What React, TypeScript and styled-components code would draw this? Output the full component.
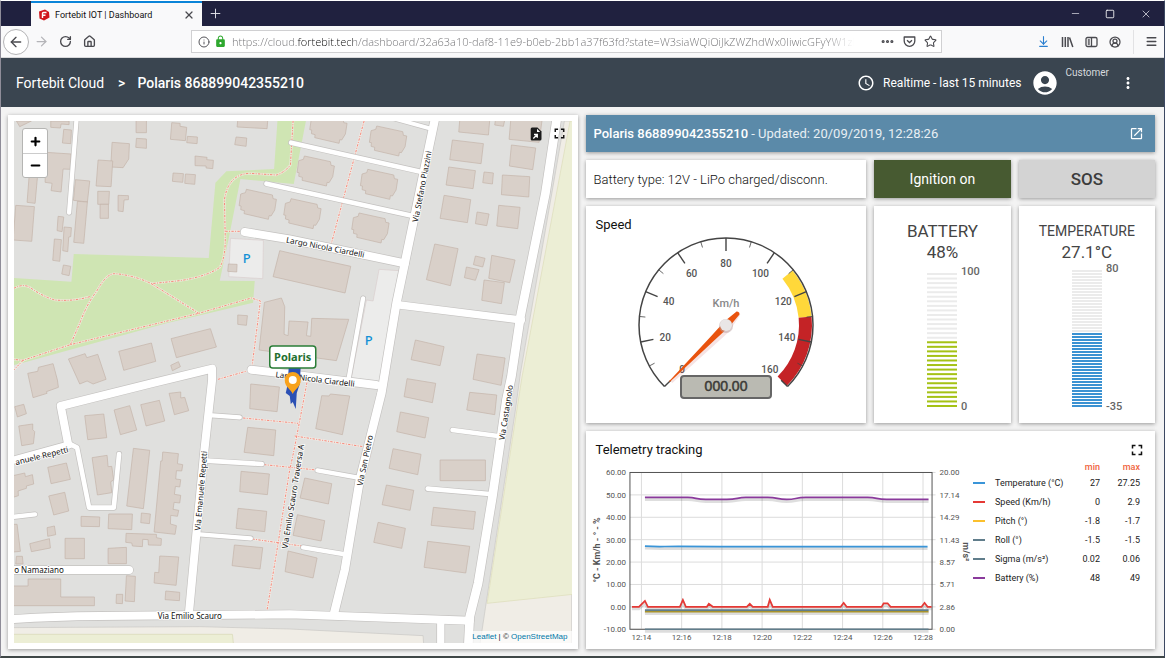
import React from "react";
import styled, { createGlobalStyle } from "styled-components";
import {
  ArrowDownToLine,
  ArrowLeft,
  ArrowRight,
  CircleUserRound,
  Ellipsis,
  House,
  Info,
  Menu,
  Minus,
  Plus,
  RotateCw,
  Square,
  Star,
  X,
} from "lucide-react";
import { MdAccessTime, MdAccountCircle, MdFullscreen, MdLock, MdMoreVert, MdOpenInNew } from "react-icons/md";

const GlobalStyle = createGlobalStyle`
  * { box-sizing: border-box; }
  body { margin: 0; font-family: Roboto, "Liberation Sans", sans-serif; color: #222; }
  button { font: inherit; color: inherit; border: 0; padding: 0; background: none; cursor: pointer; }
  h1, h2, p { margin: 0; font-weight: 400; }
  svg { display: block; flex: none; }
`;

/* ---------- browser window ---------- */

const Window = styled.div`
  display: flex;
  flex-direction: column;
  min-height: 100vh;
  border-top: 1px solid #fff;
  border-left: 1px solid #8f8d99;
  border-right: 1px solid #3c4862;
  border-bottom: 2px solid #3f4747;
  background: #f3f3f3;
`;

const TabStrip = styled.div`
  display: flex;
  align-items: stretch;
  height: 25px;
  padding-left: 30px;
  background: #20213f;
`;

const Tab = styled.div`
  display: flex;
  align-items: center;
  gap: 5px;
  width: 171px;
  padding: 0 6px 0 7px;
  border-top: 2px solid #0a84d8;
  background: #f9f9fa;
  font-size: 9px;
  color: #111;
`;

const TabTitle = styled.span`
  flex: 1;
  white-space: nowrap;
`;

const IconButton = styled.button<{ $w?: number; $color?: string }>`
  display: inline-flex;
  align-items: center;
  justify-content: center;
  flex: none;
  width: ${(p) => p.$w ?? 24}px;
  color: ${(p) => p.$color ?? "#4a4a4f"};
`;

const WindowControls = styled.div`
  display: flex;
  margin-left: auto;
`;

const Toolbar = styled.div`
  display: flex;
  align-items: center;
  height: 32px;
  padding-left: 2px;
  background: #f9f9fa;
  border-bottom: 1px solid #d8d8da;
`;

const BackButton = styled(IconButton)`
  height: 26px;
  border: 1px solid #b4b4b6;
  border-radius: 50%;
  background: #fff;
`;

const UrlBar = styled.div`
  display: flex;
  align-items: center;
  flex: 1;
  min-width: 0;
  height: 23px;
  margin: 0 89px 0 90px;
  padding: 0 3px 0 6px;
  gap: 4px;
  border: 1px solid #d0d0d2;
  background: #fff;
  color: #55555a;
`;

const UrlInput = styled.input`
  flex: 1;
  min-width: 0;
  margin: 0 20px 0 1px;
  padding: 0;
  border: 0;
  outline: 0;
  font: 11px/18px "Open Sans", "Noto Sans", sans-serif;
  font-weight: 300;
  -webkit-text-fill-color: transparent;
  background: linear-gradient(
    to right,
    #6f6f72 0 65px,
    #0c0c0d 65px 121px,
    #6f6f72 121px calc(100% - 30px),
    #ffffff 100%
  );
  -webkit-background-clip: text;
  background-clip: text;
`;

const MenuDivider = styled.span`
  width: 1px;
  height: 24px;
  margin: 0 4px 0 6px;
  background: #e2e2e4;
`;

/* ---------- dashboard shell ---------- */

const Header = styled.header`
  display: flex;
  align-items: center;
  height: 49px;
  padding: 0 24px 0 15px;
  background: #3a4550;
  color: #fff;
  font-size: 14px;
`;

const Crumb = styled.a`
  color: #fff;
  text-decoration: none;
`;

const CrumbArrow = styled.span`
  margin: 0 12px 0 14px;
  font-weight: 500;
`;

const CrumbCurrent = styled.h1`
  font-size: 14px;
  font-weight: 500;
`;

const TimeWindow = styled.button`
  display: flex;
  align-items: center;
  gap: 8px;
  margin-left: auto;
  font-size: 12px;
`;

const User = styled.div`
  display: flex;
  align-items: center;
  gap: 6px;
  margin: 0 7px 0 10px;
`;

const UserRole = styled.span`
  padding-bottom: 20px;
  font-size: 10px;
  color: #d6dade;
`;

const Main = styled.main`
  display: grid;
  grid-template-columns: minmax(0, 1fr) minmax(0, 1fr);
  gap: 8px;
  flex: 1;
  padding: 8px 9px 7px 7px;
`;

const Card = styled.section`
  background: #fff;
  box-shadow: 0 1px 4px rgba(0, 0, 0, 0.38);
`;

const Widgets = styled.div`
  display: grid;
  grid-template-columns: repeat(4, minmax(0, 1fr));
  grid-template-rows: 37px 38px minmax(217px, auto) minmax(218px, 1fr);
  gap: 8px;
`;

/* ---------- map ---------- */

const MapCard = styled(Card)`
  position: relative;
  padding: 6px;
`;

const MapSvg = styled.svg`
  width: 100%;
  height: 100%;
  font-family: "Noto Sans", "Open Sans", sans-serif;
`;

const ZoomControl = styled.div`
  position: absolute;
  top: 13px;
  left: 14px;
  display: flex;
  flex-direction: column;
  width: 26px;
  border: 1px solid #b5b5b3;
  border-radius: 3px;
  background: #fff;
  overflow: hidden;
`;

const ZoomButton = styled.button`
  display: flex;
  align-items: center;
  justify-content: center;
  height: 24px;
  color: #000;
  & + & {
    border-top: 1px solid #ccc;
  }
`;

const MapActions = styled.div`
  position: absolute;
  top: 10px;
  right: 10px;
  display: flex;
  gap: 8px;
`;

const Attribution = styled.div`
  position: absolute;
  right: 6px;
  bottom: 6px;
  padding: 0 4px;
  font: 8px/12px "Liberation Sans", sans-serif;
  background: rgba(255, 255, 255, 0.7);
  a {
    color: #0078a8;
    text-decoration: none;
  }
`;

/* ---------- widgets ---------- */

const StatusBar = styled(Card)`
  grid-column: 1 / -1;
  display: flex;
  align-items: center;
  justify-content: space-between;
  padding: 0 11px 0 8px;
  background: #5b8aa9;
  color: #e8eff4;
  font-size: 13px;
  strong {
    font-weight: 500;
    color: #fff;
  }
`;

const BatteryType = styled(Card)`
  grid-column: span 2;
  display: flex;
  align-items: center;
  padding-left: 8px;
  font-size: 13px;
  font-weight: 300;
  color: #111;
`;

const StateButton = styled.button<{ $bg: string; $fg: string; $size: number; $weight: number }>`
  background: ${(p) => p.$bg};
  color: ${(p) => p.$fg};
  font-size: ${(p) => p.$size}px;
  font-weight: ${(p) => p.$weight};
  box-shadow: 0 1px 4px rgba(0, 0, 0, 0.38);
`;

const SpeedCard = styled(Card)`
  grid-column: span 2;
  padding-top: 10px;
`;

const CardTitle = styled.h2`
  padding-left: 10px;
  font-size: 13px;
  line-height: 18px;
  color: #111;
`;

const GaugeSvg = styled.svg`
  margin: 0 auto;
`;

const LevelCard = styled(Card)`
  display: flex;
  flex-direction: column;
  align-items: center;
  padding-top: 14px;
  color: #444;
`;

const LevelTitle = styled.h2<{ $size: number }>`
  font-size: ${(p) => p.$size}px;
  line-height: 22px;
`;

const LevelValue = styled.p`
  font-size: 17px;
  line-height: 20px;
`;

const TelemetryCard = styled(Card)`
  grid-column: 1 / -1;
  padding-top: 10px;
`;

const TelemetryHead = styled.div`
  display: flex;
  align-items: center;
  justify-content: space-between;
  height: 18px;
  padding-right: 9px;
`;

const TelemetryBody = styled.div`
  display: grid;
  grid-template-columns: minmax(0, 1fr) 182px;
  align-items: start;
`;

const ChartSvg = styled.svg`
  width: 100%;
`;

const Legend = styled.table`
  border-collapse: collapse;
  width: 167px;
  margin-top: 3px;
  font-size: 9px;
  color: #222;
  th,
  td {
    height: 19px;
    padding: 0;
    text-align: right;
    font-weight: 400;
  }
  thead th,
  thead td {
    height: 11px;
    line-height: 11px;
    color: #f0643c;
    font-weight: 500;
  }
  tbody th {
    text-align: left;
  }
`;

const Swatch = styled.span<{ $color: string }>`
  display: block;
  width: 12px;
  height: 2px;
  background: ${(p) => p.$color};
`;

/* ---------- map data (three units per pixel) ---------- */

const buildings: { at: [number, number]; shapes: string[] }[] = [
  {
    at: [0, 0],
    shapes: [
      "50,33 60,50 95,33",
      "153,33 153,52 182,54 184,42 208,44 208,33",
      "192,58 215,60 213,101 188,99",
      "138,127 214,132 211,178 190,177 184,246 154,242 157,220 136,217",
      "88,200 113,202 106,280 82,277",
      "48,286 104,290 96,394 40,390",
      "175,319 192,321 187,365 172,362",
      "193,351 215,353 213,380 207,381 204,425 189,422",
      "164,387 185,389 180,454 159,451",
      "191,465 213,469 208,497 186,492",
      "227,209 270,213 263,276 221,271",
      "233,274 263,276 252,400 222,397",
      "337,97 389,101 387,147 370,173 333,171",
      "295,150 339,153 334,230 289,228",
      "294,244 329,244 327,283 294,283",
      "301,283 326,283 326,325 301,325",
      "355,256 386,257 386,269 373,270 370,305 355,303",
      "409,30 440,30 440,68 409,68",
      "410,85 440,87 440,115 408,112",
      "516,38 541,40 541,49 561,52 557,92 512,88",
      "563,79 593,81 592,101 561,98",
      "586,138 622,142 621,149 641,151 639,176 619,174 619,168 586,167",
      "520,189 551,191 549,217 518,214",
      "557,192 587,194 585,223 555,220",
      "714,30 804,30 802,56 712,51",
      "709,81 741,84 739,109 705,104",
      "686,462 712,463 711,486 684,484",
      "840,422 870,429 1053,469 1036,549 820,500",
      "794,577 845,564 855,590 853,673 865,677 868,633 925,636 920,677 933,679 936,625 1047,628 1010,752 778,720",
      "714,615 743,617 740,646 714,643",
      "514,686 632,656 650,711 530,743",
      "357,724 455,699 468,754 372,781",
      "513,766 536,755 542,770 518,782",
      "206,747 256,731 261,743 294,733 319,808 280,822 262,813 240,822",
      "84,790 114,784 116,772 160,761 173,810 176,832 140,845 142,850 100,863",
    ],
  },
  {
    at: [870, 0],
    shapes: [
      "510,30 600,30 596,75 507,66",
      "617,30 645,30 641,49 615,45",
      "663,30 757,30 748,97 658,88",
      "488,90 581,101 574,161 480,149",
      "477,171 557,182 550,236 469,225",
      "583,186 611,189 608,222 579,218",
      "665,105 738,114 729,179 659,168",
      "638,195 720,200 717,261 635,254",
      "463,256 543,269 533,338 451,325",
      "562,306 598,312 591,347 557,341",
      "627,286 691,292 684,356 621,348",
      "435,402 505,416 482,527 410,509",
      "557,438 586,445 579,471 551,464",
      "530,471 568,479 557,511 524,503",
      "606,436 676,450 660,518 597,505",
      "583,510 644,518 635,581 576,571",
      "377,690 463,710 451,767 364,749",
      "562,732 646,744 634,826 550,808",
    ],
  },
  {
    at: [870, 810],
    shapes: [
      "352,-4 438,10 428,68 343,50",
      "332,96 417,113 406,174 321,155",
      "310,206 394,223 384,284 298,265",
      "290,315 372,331 361,391 277,374",
      "265,427 347,445 336,505 252,487",
      "540,37 621,45 615,104 531,90",
      "451,240 587,240 587,302 451,302",
      "431,382 557,395 551,448 424,436",
      "414,484 540,499 528,579 403,562",
      "96,47 118,48 122,42 180,48 158,164 78,146",
      "45,294 126,311 116,372 31,354",
      "23,404 105,422 94,483 10,466",
      "-5,513 82,534 70,594 -14,575",
    ],
  },
  {
    at: [0, 810],
    shapes: [
      "753,12 839,21 832,95 750,86",
      "744,142 828,150 822,227 733,217",
      "724,274 809,282 803,344 720,335",
      "715,385 801,394 795,455 709,445",
      "704,495 789,503 781,567 697,557",
      "45,80 72,73 80,101 53,111",
      "57,138 99,132 99,149 105,155 101,191 66,197",
      "255,107 312,102 321,173 264,179",
      "343,90 390,77 411,150 362,164",
      "423,74 479,61 495,123 439,138",
      "508,40 543,36 543,54 555,52 567,92 524,104",
      "277,233 322,226 325,260 336,259 342,300 333,305 336,338 293,345",
      "401,205 450,211 431,386 381,378",
      "489,216 536,221 533,251 549,254 546,273 530,272 528,297 543,299 540,321 527,319 524,343 543,346 540,369 523,367 520,388 537,391 533,409 513,406 512,432 530,437 526,463 463,456 483,243 487,243",
      "144,262 200,249 212,298 154,311",
      "147,348 195,337 207,393 162,405",
      "40,287 75,279 77,290 98,284 102,312 80,318 80,325 55,333 56,347 40,352",
      "244,409 300,411 299,440 244,439",
      "327,402 398,402 396,449 325,446",
      "425,399 452,402 449,431 423,428",
      "379,460 470,463 470,473 485,476 484,496 446,495 445,479 429,478 428,500 398,498 396,489 378,487",
      "142,443 164,438 168,464 144,469",
      "90,491 149,476 152,504 95,515",
      "196,475 254,475 254,536 196,536",
      "325,505 380,502 380,551 325,551",
      "40,433 52,433 62,514 40,516",
      "50,529 68,529 70,552 48,552",
      "480,528 537,531 529,616 463,609 465,577 477,578",
      "498,633 540,637 539,662 496,659",
      "380,587 407,589 404,665 376,663",
      "350,643 369,643 368,671 349,670",
      "40,618 85,618 85,597 183,597 183,651 284,651 284,677 40,677",
    ],
  },
];

const villa =
  "-34,-45 44,-28 46,-17 56,-15 51,17 40,35 34,34 32,45 -41,28 -40,19 -51,16 -50,5 -56,4 -51,-31 -37,-35";
const villaSpots = [
  [774, 283],
  [908, 311],
  [948, 183],
  [1165, 93],
  [1138, 223],
  [1112, 354],
  [986, 55],
];

const roads: [string, number][] = [
  ["M231,20 L208,308", 13],
  ["M800,221 L1240,318", 14],
  ["M874,98 L1262,185", 14],
  ["M1145,15 L1290,55", 12],
  ["M1200,585 L1565,630", 22],
  ["M1090,565 L1045,815", 13],
  ["M735,366 L870,388 L1215,460", 24],
  ["M755,779 L870,793 L1130,825", 24],
  ["M20,1056 L207,1005", 22],
  ["M207,1000 L232,1013 L268,1193 L342,1193 L358,1032", 14],
  ["M20,1223 L106,1213", 13],
  ["M20,1380 L388,1380", 24],
  ["M637,916 L720,922", 13],
  ["M620,1052 L786,1062", 14],
  ["M600,1273 L753,1285", 13],
  ["M1358,960 L1495,978", 13],
  ["M1284,1136 L1470,1152", 14],
  ["M953,1081 L1075,1103", 13],
  ["M910,1312 L1030,1332", 13],
  ["M1323,1530 L1323,1620", 22],
  ["M205,1002 L183,888 L455,820 L637,776 L637,810 L614,1020 L590,1270 L568,1505", 24],
  ["M1307,20 L1265,220 L1215,460 L1190,580 L1145,850 L1080,1110 L1035,1380 L1003,1510", 25],
  ["M1672,20 L1637,250 L1562,620 L1535,800 L1520,870 L1478,1160 L1435,1420 L1410,1520 L1405,1620", 26],
  ["M20,1529 Q150,1519 300,1518 L870,1513 L1410,1532", 24],
];

const footpaths = [
  "M42,535 Q70,520 90,532 Q130,560 165,570 Q220,575 270,560",
  "M212,704 L240,640 Q262,580 290,545 Q320,490 345,491 Q400,495 455,521 L540,512 Q620,500 660,472 Q680,440 676,360 L674,270 Q685,192 750,190 L830,195 Q855,187 872,165 L880,33",
  "M455,521 L597,610",
  "M30,747 L70,751 L212,704 L597,610 L755,564 L782,573 L757,768",
  "M70,751 L42,780",
  "M677,364 L722,364",
  "M1093,33 L995,400",
  "M655,808 L745,782",
  "M730,924 L895,940",
  "M793,1064 L950,1080",
  "M758,1287 L905,1308",
  "M885,978 L1090,1010",
  "M925,800 L885,1010 L868,1090 L835,1300 L802,1500",
];

const streetNames: { text: string; x: number; y: number; angle: number; anchor?: "end" }[] = [
  { text: "Via Stefano Piazzini", x: 425, y: 187, angle: -79 },
  { text: "Largo Nicola Ciardelli", x: 325, y: 250, angle: 11 },
  { text: "Largo Nicola Ciardelli", x: 315, y: 382, angle: 7 },
  { text: "Via San Pietro", x: 368, y: 461, angle: -78 },
  { text: "Via Castagnolo", x: 509, y: 413, angle: -81 },
  { text: "Via Emilio Scauro Traversa A", x: 296, y: 497, angle: -81 },
  { text: "Via Emanuele Repetti", x: 204, y: 491, angle: -85 },
  { text: "anuele Repetti", x: 69, y: 452, angle: -14, anchor: "end" },
  { text: "o Namaziano", x: 64, y: 573, angle: 0, anchor: "end" },
  { text: "Via Emilio Scauro", x: 190, y: 619, angle: 0 },
];

function StreetMap() {
  return (
    <MapSvg viewBox="14 121 558 522" preserveAspectRatio="xMidYMid slice" role="img" aria-label="Street map">
      <rect x="0" y="100" width="600" height="560" fill="#e0e0de" />
      <g transform="translate(0 110) scale(0.33333)" strokeLinejoin="round">
        <path
          d="M1694,33 H1716 V1620 H1438 L1450,1540 L1547,900 L1562,790 Z"
          fill="#f0ede6"
          stroke="#c9c7c4"
          strokeWidth="2"
        />
        <path d="M1711,33 L1566,805 L1462,1480 L1730,1452 V33 Z" fill="#eceed5" stroke="#dcdcb8" strokeWidth="2" />
        <path d="M20,1553 L600,1550 L870,1557 L1270,1577 L1273,1620 H20 Z" fill="#f0ede6" stroke="#c9c7c4" strokeWidth="2" />
        <path d="M20,1573 H698 L703,1620 H20 Z" fill="#eceed5" stroke="#d6d8b4" strokeWidth="2" />
        <path
          d="M222,432 L627,444 L647,218 L680,184 L823,177 L834,20 H921 L882,222 L722,207 L687,385 L660,512 L765,513 L760,578 L500,640 L70,758 L42,765 L20,504 L42,504 L215,515 Z"
          fill="#cfe5b3"
        />
        <g fill="#ececeb" stroke="#d9cdcd" strokeWidth="2">
          <polygon points="692,385 791,391 789,506 687,500" />
          <polygon points="1138,478 1197,482 1175,620 1142,825 1052,818 1100,570 1120,573" />
        </g>
        <g fill="#d9d0c9" stroke="#c2b2a7" strokeWidth="2">
          {buildings.map((b) => (
            <g key={b.at.join()} transform={`translate(${b.at[0]} ${b.at[1]})`}>
              {b.shapes.map((s) => (
                <polygon key={s} points={s} />
              ))}
            </g>
          ))}
          {villaSpots.map(([x, y]) => (
            <polygon key={`${x}-${y}`} points={villa} transform={`translate(${x} ${y})`} />
          ))}
        </g>
        <g fill="none" strokeLinejoin="round">
          {footpaths.map((d) => (
            <path key={d} d={d} stroke="#f3ece6" strokeOpacity="0.7" strokeWidth="7" />
          ))}
          {footpaths.map((d) => (
            <path key={d} d={d} stroke="#f98a7c" strokeWidth="3" strokeDasharray="7 4 3 4" />
          ))}
          <g strokeLinecap="round">
            {roads.map(([d, w]) => (
              <path key={d} d={d} stroke="#c4c2c0" strokeWidth={w + 4} />
            ))}
            {roads.map(([d, w]) => (
              <path key={d} d={d} stroke="#fff" strokeWidth={w} />
            ))}
          </g>
        </g>
      </g>
      <g fontSize="8" fill="#111" stroke="#fff" strokeWidth="2" strokeOpacity="0.8" paintOrder="stroke">
        {streetNames.map((s) => (
          <text
            key={`${s.text}${s.x}`}
            textAnchor={s.anchor ?? "middle"}
            transform={`translate(${s.x} ${s.y}) rotate(${s.angle})`}
          >
            {s.text}
          </text>
        ))}
      </g>
      <g fontSize="13" fontWeight="500" fill="#1290d6" textAnchor="middle">
        <text x="247" y="263">P</text>
        <text x="369" y="345">P</text>
      </g>
      <path d="M289,366 H301 L300,384 L297,393 L296,409 L293,402 L291,404 L290,396 L286,393 L288,384 Z" fill="#2b50b4" />
      <path d="M293,394 C291,389 285,387 285,380 A8,8 0 0 1 301,380 C301,387 295,389 293,394 Z" fill="#f8a21c" />
      <circle cx="293" cy="380" r="4" fill="#fff" />
      <rect x="270" y="346" width="46" height="22" rx="3" fill="#fff" stroke="#2a7d37" strokeWidth="1.5" />
      <text
        x="293"
        y="361"
        fontSize="11"
        fontWeight="700"
        fill="#256f30"
        textAnchor="middle"
        fontFamily="'Noto Sans', sans-serif"
      >
        Polaris
      </text>
    </MapSvg>
  );
}

function ExportIcon() {
  return (
    <svg width="16" height="16" viewBox="0 0 16 16" aria-hidden="true">
      <path d="M4 1.500h5.500l4 4v7.500q0 1.500-1.500 1.500h-8q-1.300 0-1.300-1.500v-10q0-1.500 1.300-1.500z" fill="#1c1c1c" />
      <path d="M9 2.800v3.200h3.200z" fill="#fff" />
      <path d="M5.300 12.500l3.500-3.500M6 8.500h3.300v3.300" fill="none" stroke="#fff" strokeWidth="1.300" />
    </svg>
  );
}

/* ---------- speed gauge ---------- */

const polar = (value: number, r: number): [number, number] => {
  const a = ((-135 + (value / 160) * 270) * Math.PI) / 180;
  return [r * Math.sin(a), -r * Math.cos(a)];
};

const band = (from: number, to: number, outer: number, inner: number) => {
  const [a, b, c, d] = [polar(from, outer), polar(to, outer), polar(to, inner), polar(from, inner)];
  return `M${a} A${outer},${outer} 0 0 1 ${b} L${c} A${inner},${inner} 0 0 0 ${d} Z`;
};

function SpeedGauge() {
  const steps = Array.from({ length: 17 }, (_, i) => i * 10);
  return (
    <GaugeSvg width="200" height="170" viewBox="-100 -91 200 170" role="img" aria-label="Speed 0 Km/h">
      <path d={band(110, 130, 86, 73)} fill="#ffd83a" />
      <path d={band(130, 160, 86, 73)} fill="#c42326" />
      <path d={`M${polar(0, 87)} A87,87 0 1 1 ${polar(160, 87)}`} fill="none" stroke="#444" strokeWidth="1.500" />
      {steps.map((v) => {
        const major = v % 20 === 0;
        const [x1, y1] = polar(v, 87);
        const [x2, y2] = polar(v, v % 160 === 0 ? 78 : major ? 74 : 81);
        return <line key={v} x1={x1} y1={y1} x2={x2} y2={y2} stroke="#444" strokeWidth={major ? 1.4 : 0.8} />;
      })}
      <g fontSize="10" fontWeight="500" fill="#555" textAnchor="middle">
        {steps
          .filter((v) => v % 20 === 0)
          .map((v) => {
            const [x, y] = polar(v, 62);
            return (
              <text key={v} x={x} y={y + 4}>
                {v}
              </text>
            );
          })}
        <text x="0" y="-18" fontSize="11" fill="#888">
          Km/h
        </text>
      </g>
      <g transform="rotate(45)">
        <path d="M-2,-17 Q0,-20 3,-17 L7,3 L3,79 L1,79 L-2,0 Z" fill="#c04040" opacity="0.15" />
        <path d="M-2,-17 Q0,-19 2,-17 L3.500,-2 L2.500,20 L0.500,80 L-0.500,80 L-2.500,20 L-3.500,-2 Z" fill="#e9530e" />
      </g>
      <circle cx="0" cy="1" r="7" fill="#b9a0a0" opacity="0.5" />
      <circle cx="0" cy="0" r="6" fill="#e9e6e6" />
      <rect x="-45" y="51" width="90" height="22" rx="3" fill="#babab2" stroke="#666" strokeWidth="2" />
      <text
        x="0"
        y="66"
        fontSize="14"
        fill="#3c3c38"
        textAnchor="middle"
        stroke="#3c3c38"
        strokeWidth="0.500"
        fontFamily="'Liberation Sans', sans-serif"
      >
        000.00
      </text>
    </GaugeSvg>
  );
}

/* ---------- level bars ---------- */

interface LevelProps {
  title: string;
  size: number;
  value: string;
  top: string;
  bottom: string;
  count: number;
  filled: number;
  height: number;
  color: string;
}

function Level({ title, size, value, top, bottom, count, filled, height, color }: LevelProps) {
  const pitch = (height - 2) / (count - 1);
  const start = 145 - height;
  return (
    <LevelCard>
      <LevelTitle $size={size}>{title}</LevelTitle>
      <LevelValue>{value}</LevelValue>
      <svg width="110" height="151" viewBox="0 0 110 151" aria-hidden="true">
        {Array.from({ length: count }, (_, i) => (
          <rect
            key={i}
            x="40"
            y={start + i * pitch}
            width="30"
            height="2"
            fill={i >= count - filled ? color : "#ebebeb"}
          />
        ))}
        <g fontSize="11" fontWeight="500" fill="#666">
          <text x="74" y={start + 2}>
            {top}
          </text>
          <text x="74" y="148">
            {bottom}
          </text>
        </g>
      </svg>
    </LevelCard>
  );
}

/* ---------- telemetry chart ---------- */

const leftTicks = ["60.00", "50.00", "40.00", "30.00", "20.00", "10.00", "0.00", "-10.00"];
const rightTicks = ["20.00", "17.14", "14.29", "11.43", "8.57", "5.71", "2.86", "0.00"];
const timeTicks = ["12:14", "12:16", "12:18", "12:20", "12:22", "12:24", "12:26", "12:28"];

const series = [
  { d: "M645,629.500 H929", color: "#607d8b" },
  { d: "M645,611.800 H929", color: "#a8932c" },
  { d: "M645,610.300 H929", color: "#607d8b" },
  {
    d: "M632,607 H639 L642,604 L645,601 L648,607 H680 L683,600 L686,607 H707 L709,604 L713,607 H747 L750,604 L753,607 H768 L770,600 L773,607 H841 L844,603 L847,607 H882 L884,603.500 H888 L891,607 H922 L925,603 L928,607 H932",
    color: "#e53935",
  },
  { d: "M645,546.200 Q655,546.800 665,546.600 T720,546.700 H928", color: "#3a95d8" },
  {
    d: "M645,497.500 H688 C697,497.500 695,499.500 706,499.500 H727 C738,499.500 737,497.500 746,497.500 H768 C778,497.500 777,499.500 787,499.500 S795,497.500 806,497.500 H868 C878,497.500 876,499.500 887,499.500 H929",
    color: "#8a3a9c",
  },
];

function TelemetryChart() {
  const row = (i: number) => 472.5 + i * 22.43;
  const col = (i: number) => 641.5 + i * 40.28;
  return (
    <ChartSvg viewBox="586 459 388 186" role="img" aria-label="Telemetry tracking chart">
      {leftTicks.map((_, i) => (
        <line key={i} x1="630" x2="936" y1={row(i)} y2={row(i)} stroke="#dcdcdc" />
      ))}
      {timeTicks.map((_, i) => (
        <line key={i} x1={col(i)} x2={col(i)} y1="473" y2="629" stroke="#dcdcdc" />
      ))}
      <rect x="630" y="472.500" width="302.500" height="157" fill="none" stroke="#545454" />
      <g fill="none" strokeWidth="3" stroke="#000" opacity="0.13" transform="translate(0 2)">
        {series.map((s) => (
          <path key={s.d} d={s.d} />
        ))}
      </g>
      <g fill="none" strokeWidth="1.700">
        {series.map((s) => (
          <path key={s.d} d={s.d} stroke={s.color} />
        ))}
      </g>
      <g fontSize="8" fill="#545454">
        {leftTicks.map((t, i) => (
          <text key={t} x="626" y={row(i) + 3} textAnchor="end">
            {t}
          </text>
        ))}
        {rightTicks.map((t, i) => (
          <text key={t} x="940" y={row(i) + 3}>
            {t}
          </text>
        ))}
        {timeTicks.map((t, i) => (
          <text key={t} x={col(i)} y="640" textAnchor="middle">
            {t}
          </text>
        ))}
      </g>
      <g fontSize="9" fontWeight="700" fill="#545454" textAnchor="middle">
        <text transform="translate(600 550) rotate(-90)">°C - Km/h - ° - %</text>
        <text transform="translate(963 552) rotate(90)">m/s²</text>
      </g>
    </ChartSvg>
  );
}

const legendRows = [
  { name: "Temperature (°C)", color: "#3a95d8", min: "27", max: "27.25" },
  { name: "Speed (Km/h)", color: "#e53935", min: "0", max: "2.9" },
  { name: "Pitch (°)", color: "#fbc02d", min: "-1.8", max: "-1.7" },
  { name: "Roll (°)", color: "#607d8b", min: "-1.5", max: "-1.5" },
  { name: "Sigma (m/s²)", color: "#607d8b", min: "0.02", max: "0.06" },
  { name: "Battery (%)", color: "#8a3a9c", min: "48", max: "49" },
];

function TelemetryLegend() {
  return (
    <Legend>
      <colgroup>
        <col style={{ width: 22 }} />
        <col />
        <col style={{ width: 30 }} />
        <col style={{ width: 40 }} />
      </colgroup>
      <thead>
        <tr>
          <td />
          <td />
          <th scope="col">min</th>
          <th scope="col">max</th>
        </tr>
      </thead>
      <tbody>
        {legendRows.map((r) => (
          <tr key={r.name}>
            <td>
              <Swatch $color={r.color} />
            </td>
            <th scope="row">{r.name}</th>
            <td>{r.min}</td>
            <td>{r.max}</td>
          </tr>
        ))}
      </tbody>
    </Legend>
  );
}

/* ---------- browser icons ---------- */

function FortebitLogo() {
  return (
    <svg width="12" height="12" viewBox="0 0 12 12" aria-hidden="true">
      <path d="M1 2.500L7 .5l4 2.500.5 5.500L6 11.500 1.500 9.500z" fill="#d0161c" />
      <path d="M8.500 3.500H5.500q-1 0-1 1v4.500M4.500 6.300h3" fill="none" stroke="#fff" strokeWidth="1.400" />
    </svg>
  );
}

function PocketIcon() {
  return (
    <svg width="13" height="13" viewBox="0 0 13 13" fill="none" stroke="currentColor" strokeWidth="1.300" aria-hidden="true">
      <path d="M1.200 2h10.600v4a5.300 5.300 0 0 1-10.600 0z" strokeLinejoin="round" />
      <path d="M4 5.200l2.500 2.300L9 5.200" />
    </svg>
  );
}

function LibraryIcon() {
  return (
    <svg width="13" height="12" viewBox="0 0 13 12" fill="none" stroke="currentColor" strokeWidth="1.500" aria-hidden="true">
      <path d="M1.500 1v10M4.300 1v10M7 1v10M8.500 1.500l3.300 9.500" />
    </svg>
  );
}

function SidebarIcon() {
  return (
    <svg width="13" height="12" viewBox="0 0 13 12" fill="none" stroke="currentColor" strokeWidth="1.300" aria-hidden="true">
      <rect x="1" y="1.500" width="11" height="9" rx="1.500" />
      <path d="M6.500 1.500v9M2.800 4h2M2.800 6h2M2.800 8h2" />
    </svg>
  );
}

export default function App() {
  return (
    <>
      <GlobalStyle />
      <Window>
        <TabStrip>
          <Tab>
            <FortebitLogo />
            <TabTitle>Fortebit IOT | Dashboard</TabTitle>
            <IconButton $w={14} aria-label="Close tab">
              <X size={12} strokeWidth={2.5} />
            </IconButton>
          </Tab>
          <IconButton $w={26} $color="#e4e4ec" aria-label="New tab">
            <Plus size={15} strokeWidth={1.5} />
          </IconButton>
          <WindowControls>
            <IconButton $w={34} $color="#e4e4ec" aria-label="Minimize">
              <Minus size={11} strokeWidth={1.5} />
            </IconButton>
            <IconButton $w={35} $color="#fff" aria-label="Maximize">
              <Square size={10} strokeWidth={2} />
            </IconButton>
            <IconButton $w={37} $color="#e4e4ec" aria-label="Close window">
              <X size={12} strokeWidth={1.5} />
            </IconButton>
          </WindowControls>
        </TabStrip>
        <Toolbar>
          <BackButton $w={26} aria-label="Back">
            <ArrowLeft size={16} />
          </BackButton>
          <IconButton $color="#b4b4b8" aria-label="Forward">
            <ArrowRight size={15} />
          </IconButton>
          <IconButton $w={25} aria-label="Reload">
            <RotateCw size={13} strokeWidth={2.5} />
          </IconButton>
          <IconButton $w={23} aria-label="Home">
            <House size={13} strokeWidth={2.5} />
          </IconButton>
          <UrlBar>
            <Info size={12} />
            <MdLock size={13} color="#2fa82f" />
            <UrlInput
              aria-label="Address"
              defaultValue="https://cloud.fortebit.tech/dashboard/32a63a10-daf8-11e9-b0eb-2bb1a37f63fd?state=W3siaWQiOiJkZWZhdWx0IiwicGFyYW1zIjp7fX"
            />
            <IconButton $w={18} aria-label="Page actions">
              <Ellipsis size={15} strokeWidth={3} />
            </IconButton>
            <IconButton $w={18} aria-label="Save to Pocket">
              <PocketIcon />
            </IconButton>
            <IconButton $w={16} aria-label="Bookmark">
              <Star size={13} />
            </IconButton>
          </UrlBar>
          <IconButton $color="#2a7fd0" aria-label="Downloads">
            <ArrowDownToLine size={13} />
          </IconButton>
          <IconButton aria-label="Library">
            <LibraryIcon />
          </IconButton>
          <IconButton aria-label="Sidebars">
            <SidebarIcon />
          </IconButton>
          <IconButton aria-label="Account">
            <CircleUserRound size={12} strokeWidth={2.5} />
          </IconButton>
          <MenuDivider />
          <IconButton $w={26} aria-label="Open menu">
            <Menu size={13} strokeWidth={2.5} />
          </IconButton>
        </Toolbar>
        <Header>
          <Crumb href="#">Fortebit Cloud</Crumb>
          <CrumbArrow>&gt;</CrumbArrow>
          <CrumbCurrent>Polaris 868899042355210</CrumbCurrent>
          <TimeWindow>
            <MdAccessTime size={18} />
            Realtime - last 15 minutes
          </TimeWindow>
          <User>
            <MdAccountCircle size={28} />
            <UserRole>Customer</UserRole>
          </User>
          <IconButton $color="#fff" aria-label="More">
            <MdMoreVert size={18} />
          </IconButton>
        </Header>
        <Main>
          <MapCard>
            <StreetMap />
            <ZoomControl>
              <ZoomButton aria-label="Zoom in">
                <Plus size={13} strokeWidth={4} />
              </ZoomButton>
              <ZoomButton aria-label="Zoom out">
                <Minus size={13} strokeWidth={4} />
              </ZoomButton>
            </ZoomControl>
            <MapActions>
              <IconButton $w={16} aria-label="Export">
                <ExportIcon />
              </IconButton>
              <IconButton $w={16} $color="#111" aria-label="Fullscreen map">
                <MdFullscreen size={17} />
              </IconButton>
            </MapActions>
            <Attribution>
              <a href="#leaflet">Leaflet</a> | © <a href="#osm">OpenStreetMap</a>
            </Attribution>
          </MapCard>
          <Widgets>
            <StatusBar>
              <span>
                <strong>Polaris 868899042355210</strong> - Updated: 20/09/2019, 12:28:26
              </span>
              <IconButton $w={15} $color="#fff" aria-label="Open details">
                <MdOpenInNew size={15} />
              </IconButton>
            </StatusBar>
            <BatteryType>Battery type: 12V - LiPo charged/disconn.</BatteryType>
            <StateButton $bg="#475a31" $fg="#fff" $size={14} $weight={400}>
              Ignition on
            </StateButton>
            <StateButton $bg="#d3d3d3" $fg="#3c3c3c" $size={17} $weight={500}>
              SOS
            </StateButton>
            <SpeedCard>
              <CardTitle>Speed</CardTitle>
              <SpeedGauge />
            </SpeedCard>
            <Level
              title="BATTERY"
              size={17}
              value="48%"
              top="100"
              bottom="0"
              count={30}
              filled={15}
              height={134}
              color="#a5c216"
            />
            <Level
              title="TEMPERATURE"
              size={14}
              value="27.1°C"
              top="80"
              bottom="-35"
              count={46}
              filled={25}
              height={137}
              color="#3b92d2"
            />
            <TelemetryCard>
              <TelemetryHead>
                <CardTitle>Telemetry tracking</CardTitle>
                <IconButton $w={18} $color="#111" aria-label="Fullscreen chart">
                  <MdFullscreen size={18} />
                </IconButton>
              </TelemetryHead>
              <TelemetryBody>
                <TelemetryChart />
                <TelemetryLegend />
              </TelemetryBody>
            </TelemetryCard>
          </Widgets>
        </Main>
      </Window>
    </>
  );
}
